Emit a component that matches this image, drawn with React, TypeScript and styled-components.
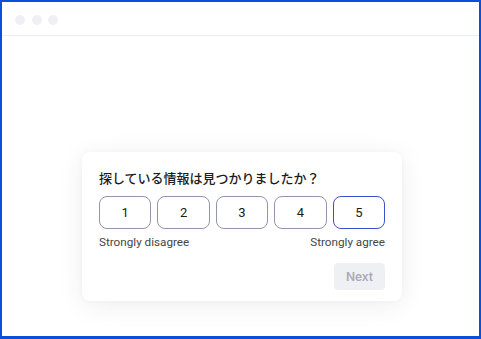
import React from "react";
import styled, { createGlobalStyle } from "styled-components";

const Global = createGlobalStyle`
  html, body { margin: 0; padding: 0; background: #ffffff; }
  body { font-family: Roboto, "Noto Sans CJK JP", sans-serif; }
  * { box-sizing: border-box; }
`;

const Window = styled.div`
  width: 481px;
  height: 339px;
  border: 2px solid #0a4fdc;
  border-bottom-width: 3px;
  display: flex;
  flex-direction: column;
  background: #ffffff;
`;

const TitleBar = styled.div`
  height: 34px;
  flex: none;
  display: flex;
  align-items: center;
  gap: 6.5px;
  padding: 2px 0 0 13px;
  border-bottom: 1px solid #ededed;
`;

const Dot = styled.span`
  width: 10px;
  height: 10px;
  border-radius: 50%;
  background: #eff0f4;
`;

const Main = styled.div`
  flex: 1;
  display: flex;
  flex-direction: column;
  justify-content: flex-end;
  padding: 0 0 35px 80px;
`;

const Card = styled.div`
  width: 320px;
  background: #ffffff;
  border-radius: 8px;
  box-shadow: 0 4px 28px rgba(20, 20, 40, 0.07), 0 0 6px rgba(20, 20, 40, 0.03);
  padding: 17px 17px 11px 17px;
  display: flex;
  flex-direction: column;
`;

const Question = styled.div`
  font-family: Roboto, "Noto Sans CJK JP", sans-serif;
  font-size: 13px;
  font-weight: 500;
  line-height: 20px;
  color: #1c1c1e;
`;

const Scale = styled.div`
  display: flex;
  gap: 6px;
  margin-top: 7px;
`;

const ScaleButton = styled.button<{ $active?: boolean }>`
  flex: 1;
  height: 33px;
  border-radius: 8px;
  border: 1px solid ${(p) => (p.$active ? "#3a52c9" : "#9295ad")};
  background: #ffffff;
  font-family: Roboto, sans-serif;
  font-size: 13px;
  color: #1a1a1a;
  padding: 0;
`;

const Labels = styled.div`
  display: flex;
  justify-content: space-between;
  margin-top: 5px;
  font-size: 11.7px;
  line-height: 16px;
  color: #454545;
`;

const Footer = styled.div`
  display: flex;
  justify-content: flex-end;
  margin-top: 13px;
`;

const NextButton = styled.button`
  width: 51px;
  height: 27px;
  border: none;
  border-radius: 4px;
  background: #eff0f3;
  color: #a9abb8;
  font-family: Inter, Roboto, sans-serif;
  font-size: 12px;
  font-weight: 600;
  padding: 0;
`;

export default function App() {
  return (
    <>
      <Global />
      <Window>
        <TitleBar>
          <Dot />
          <Dot />
          <Dot />
        </TitleBar>
        <Main>
          <Card>
            <Question>探している情報は見つかりましたか？</Question>
            <Scale>
              {[1, 2, 3, 4, 5].map((n) => (
                <ScaleButton key={n} $active={n === 5}>
                  {n}
                </ScaleButton>
              ))}
            </Scale>
            <Labels>
              <span>Strongly disagree</span>
              <span>Strongly agree</span>
            </Labels>
            <Footer>
              <NextButton disabled>Next</NextButton>
            </Footer>
          </Card>
        </Main>
      </Window>
    </>
  );
}
